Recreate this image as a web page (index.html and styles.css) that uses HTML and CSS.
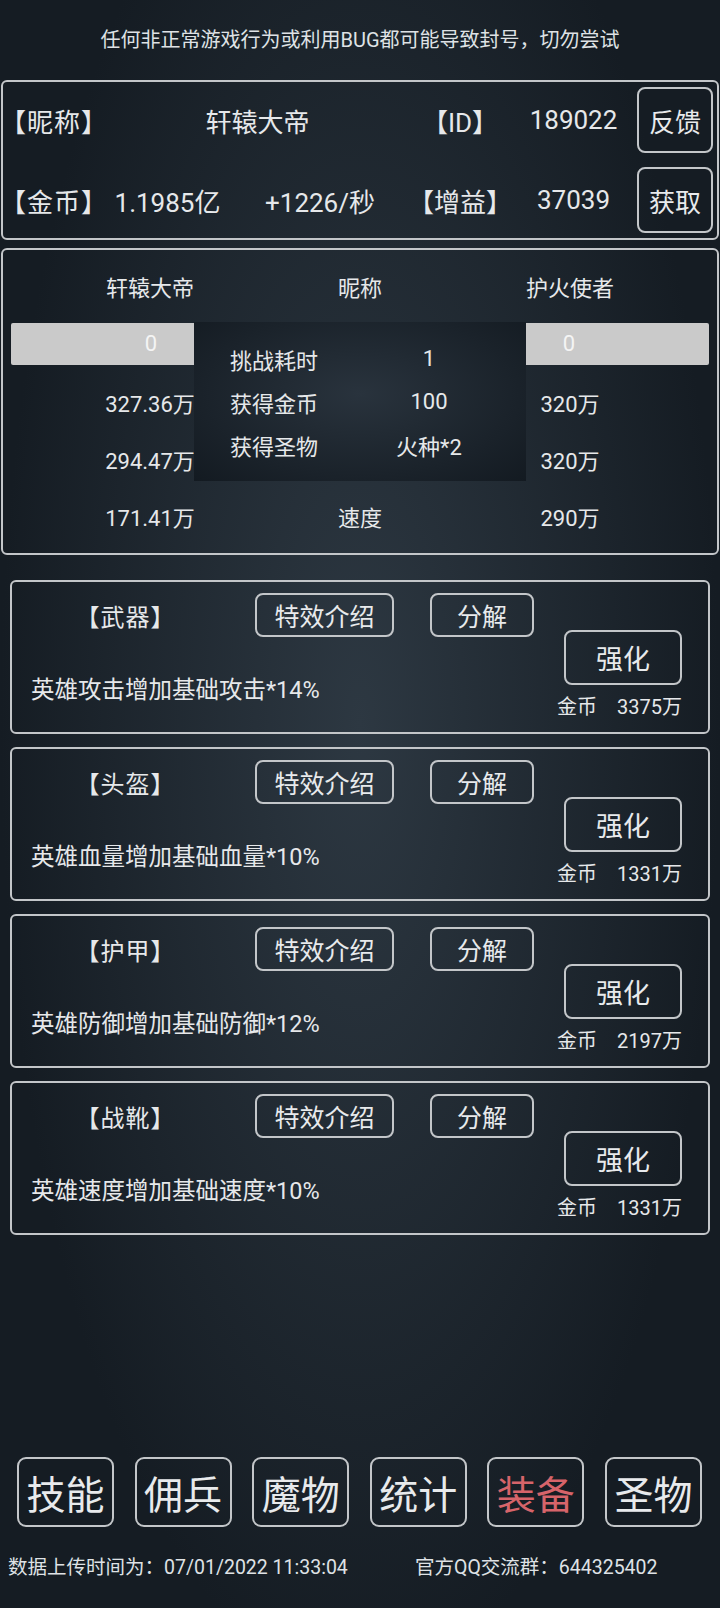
FILE: index.html
```html
<!DOCTYPE html>
<html lang="zh-CN">
<head>
    <meta charset="UTF-8">
    <meta name="viewport" content="width=device-width, initial-scale=1.0">
    <title>装备</title>
    <link rel="stylesheet" href="styles.css">
</head>
<body>
    <div class="page">
        <div class="notice">任何非正常游戏行为或利用BUG都可能导致封号，切勿尝试</div>

        <div class="panel info">
            <div class="cell label">【昵称】</div>
            <div class="cell wide">轩辕大帝</div>
            <div class="cell">【ID】</div>
            <div class="cell">189022</div>
            <button class="btn side-btn">反馈</button>

            <div class="cell label">【金币】</div>
            <div class="cell">1.1985亿</div>
            <div class="cell">+1226/秒</div>
            <div class="cell">【增益】</div>
            <div class="cell">37039</div>
            <button class="btn side-btn">获取</button>
        </div>

        <div class="panel battle">
            <div class="battle-row head">
                <div>轩辕大帝</div>
                <div>昵称</div>
                <div>护火使者</div>
            </div>
            <div class="bars">
                <div class="bar">0</div>
                <div class="bar">0</div>
            </div>
            <div class="battle-row">
                <div>327.36万</div>
                <div>攻击</div>
                <div>320万</div>
            </div>
            <div class="battle-row">
                <div>294.47万</div>
                <div>防御</div>
                <div>320万</div>
            </div>
            <div class="battle-row">
                <div>171.41万</div>
                <div>速度</div>
                <div>290万</div>
            </div>

            <!-- 战斗结果弹窗 -->
            <div class="result">
                <div class="result-row"><span class="result-key">挑战耗时</span><span class="result-val">1</span></div>
                <div class="result-row"><span class="result-key">获得金币</span><span class="result-val">100</span></div>
                <div class="result-row"><span class="result-key">获得圣物</span><span class="result-val">火种*2</span></div>
            </div>
        </div>

        <div class="equips">
            <div class="equip">
                <div class="equip-main">
                    <div class="equip-top">
                        <div class="equip-name">【武器】</div>
                        <button class="btn small effect">特效介绍</button>
                        <button class="btn small split">分解</button>
                    </div>
                    <div class="equip-desc">英雄攻击增加基础攻击*14%</div>
                </div>
                <div class="equip-side">
                    <button class="btn upgrade">强化</button>
                    <div class="cost"><span>金币</span><span>3375万</span></div>
                </div>
            </div>
            <div class="equip">
                <div class="equip-main">
                    <div class="equip-top">
                        <div class="equip-name">【头盔】</div>
                        <button class="btn small effect">特效介绍</button>
                        <button class="btn small split">分解</button>
                    </div>
                    <div class="equip-desc">英雄血量增加基础血量*10%</div>
                </div>
                <div class="equip-side">
                    <button class="btn upgrade">强化</button>
                    <div class="cost"><span>金币</span><span>1331万</span></div>
                </div>
            </div>
            <div class="equip">
                <div class="equip-main">
                    <div class="equip-top">
                        <div class="equip-name">【护甲】</div>
                        <button class="btn small effect">特效介绍</button>
                        <button class="btn small split">分解</button>
                    </div>
                    <div class="equip-desc">英雄防御增加基础防御*12%</div>
                </div>
                <div class="equip-side">
                    <button class="btn upgrade">强化</button>
                    <div class="cost"><span>金币</span><span>2197万</span></div>
                </div>
            </div>
            <div class="equip">
                <div class="equip-main">
                    <div class="equip-top">
                        <div class="equip-name">【战靴】</div>
                        <button class="btn small effect">特效介绍</button>
                        <button class="btn small split">分解</button>
                    </div>
                    <div class="equip-desc">英雄速度增加基础速度*10%</div>
                </div>
                <div class="equip-side">
                    <button class="btn upgrade">强化</button>
                    <div class="cost"><span>金币</span><span>1331万</span></div>
                </div>
            </div>
        </div>

        <div class="nav">
            <button class="btn nav-btn">技能</button>
            <button class="btn nav-btn">佣兵</button>
            <button class="btn nav-btn">魔物</button>
            <button class="btn nav-btn">统计</button>
            <button class="btn nav-btn active">装备</button>
            <button class="btn nav-btn">圣物</button>
        </div>

        <div class="footer">
            <span class="upload-time">数据上传时间为：07/01/2022 11:33:04</span>
            <span>官方QQ交流群：644325402</span>
        </div>
    </div>
</body>
</html>
```

FILE: styles.css
```css
* {
    box-sizing: border-box;
}

body {
    margin: 0;
    font-family: Roboto, "Noto Sans CJK SC", sans-serif;
    color: #e6e8ea;
    background: radial-gradient(ellipse 50% 60% at 50% 45%, #2d3842 0%, #151c23 100%);
    background-color: #151c23;
}

.page {
    min-height: 100vh;
    display: flex;
    flex-direction: column;
}

.btn {
    font-family: inherit;
    color: #e8eaec;
    background: transparent;
    border: 2px solid #c3c6c9;
    border-radius: 8px;
    padding: 0;
}

.notice {
    height: 80px;
    line-height: 80px;
    text-align: center;
    font-size: 20px;
    color: #dfe2e5;
}

.panel {
    margin: 0 1px;
    border: 2px solid #c3c6c9;
    border-radius: 6px;
}

/* 玩家信息 */
.info {
    height: 160px;
    padding: 5px 4px 5px 0;
    display: grid;
    grid-template-columns: 102px 125px 180px 100px 127px 1fr;
    grid-template-rows: 66px 66px;
    row-gap: 14px;
    font-size: 26px;
}

.cell {
    display: flex;
    align-items: center;
    justify-content: center;
    white-space: nowrap;
}

.cell.label {
    justify-content: flex-start;
    margin-left: -3px;
    letter-spacing: 1px;
}

.cell.wide {
    grid-column: span 2;
}

.side-btn {
    font-size: 26px;
    height: 66px;
}

/* 对战面板 */
.battle {
    position: relative;
    margin-top: 8px;
    padding: 8px 0 9px;
    font-size: 22px;
}

.battle-row {
    display: grid;
    grid-template-columns: repeat(3, 210px);
    justify-content: center;
    height: 57px;
    align-items: center;
    text-align: center;
}

.battle-row.head {
    height: 56px;
}

.bars {
    display: flex;
    justify-content: space-between;
    padding: 0 8px;
    margin: 9px 0 8px;
}

.bar {
    width: 280px;
    height: 42px;
    line-height: 42px;
    background: #cacaca;
    color: #f4f4f4;
    text-align: center;
    border-radius: 2px;
}

.result {
    position: absolute;
    left: 191px;
    top: 72px;
    width: 332px;
    height: 159px;
    padding: 15px 0 0 36px;
    background: radial-gradient(ellipse at 50% 45%, #29333d 0%, #131a21 100%);
}

.result-row {
    display: flex;
    height: 43px;
    align-items: center;
    white-space: nowrap;
}

.result-key {
    flex: none;
    width: 92px;
}

.result-val {
    flex: none;
    width: 214px;
    text-align: center;
}

/* 装备 */
.equips {
    display: flex;
    flex-direction: column;
    gap: 13px;
    padding: 0 10px;
    margin-top: 25px;
}

.equip {
    display: flex;
    height: 154px;
    border: 2px solid #c3c6c9;
    border-radius: 6px;
}

.equip-main {
    padding-top: 11px;
}

.equip-top {
    display: flex;
    height: 44px;
    align-items: center;
}

.equip-name {
    width: 233px;
    padding-right: 6px;
    text-align: center;
    font-size: 24px;
    letter-spacing: 1px;
}

.btn.small {
    height: 44px;
    font-size: 25px;
}

.effect {
    width: 139px;
    margin-left: 10px;
}

.split {
    width: 104px;
    margin-left: 36px;
}

.equip-desc {
    margin-top: 38px;
    padding-left: 19px;
    line-height: 30px;
    font-size: 23.5px;
}

.equip-side {
    margin-left: auto;
    margin-right: 26px;
    padding-top: 48px;
    display: flex;
    flex-direction: column;
    align-items: flex-end;
}

.upgrade {
    width: 118px;
    height: 55px;
    font-size: 27px;
}

.cost {
    margin-top: 10px;
    line-height: 24px;
    font-size: 20px;
    display: flex;
    gap: 20px;
}

/* 底部导航 */
.nav {
    margin-top: auto;
    display: flex;
    justify-content: space-between;
    padding: 0 18px 0 17px;
}

.nav-btn {
    width: 97px;
    height: 70px;
    font-size: 39px;
    border-radius: 9px;
}

.nav-btn.active {
    color: #d6646a;
}

.footer {
    margin-top: 29px;
    padding: 0 0 28px 8px;
    line-height: 24px;
    font-size: 19.5px;
    display: flex;
    color: #dfe2e5;
}

.upload-time {
    width: 407px;
}
```
